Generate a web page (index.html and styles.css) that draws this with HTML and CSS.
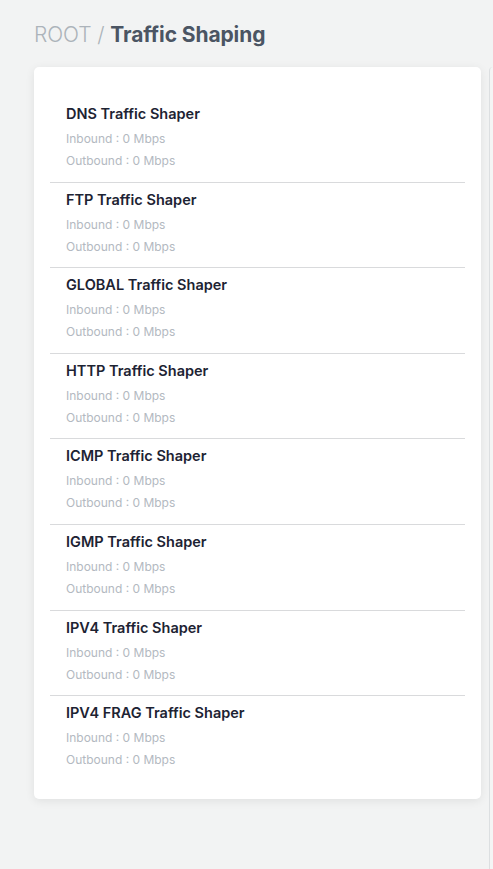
FILE: index.html
```html
<!DOCTYPE html>
<html>
<head>
<meta charset="utf-8">
<link rel="stylesheet" href="styles.css">
</head>
<body>
<div class="page">
  <h1 class="crumb"><span class="root">ROOT / </span><span class="current">Traffic Shaping</span></h1>
  <div class="row">
    <div class="card">
      <div class="item"><div class="name">DNS Traffic Shaper</div><div class="sub">Inbound : 0 Mbps</div><div class="sub">Outbound : 0 Mbps</div></div>
      <div class="item"><div class="name">FTP Traffic Shaper</div><div class="sub">Inbound : 0 Mbps</div><div class="sub">Outbound : 0 Mbps</div></div>
      <div class="item"><div class="name">GLOBAL Traffic Shaper</div><div class="sub">Inbound : 0 Mbps</div><div class="sub">Outbound : 0 Mbps</div></div>
      <div class="item"><div class="name">HTTP Traffic Shaper</div><div class="sub">Inbound : 0 Mbps</div><div class="sub">Outbound : 0 Mbps</div></div>
      <div class="item"><div class="name">ICMP Traffic Shaper</div><div class="sub">Inbound : 0 Mbps</div><div class="sub">Outbound : 0 Mbps</div></div>
      <div class="item"><div class="name">IGMP Traffic Shaper</div><div class="sub">Inbound : 0 Mbps</div><div class="sub">Outbound : 0 Mbps</div></div>
      <div class="item"><div class="name">IPV4 Traffic Shaper</div><div class="sub">Inbound : 0 Mbps</div><div class="sub">Outbound : 0 Mbps</div></div>
      <div class="item"><div class="name">IPV4 FRAG Traffic Shaper</div><div class="sub">Inbound : 0 Mbps</div><div class="sub">Outbound : 0 Mbps</div></div>
    </div>
    <div class="side"></div>
  </div>
</div>
</body>
</html>
```
FILE: styles.css
```css
html, body {
  margin: 0;
  padding: 0;
  background: #f2f3f3;
  height: 100%;
  overflow: hidden;
}
body {
  font-family: Inter, "Noto Sans", sans-serif;
}
.page {
  padding: 21px 0 0 34px;
}
.crumb {
  margin: 0;
  font-size: 21px;
  line-height: 28px;
  font-weight: 300;
  letter-spacing: -0.1px;
}
.root {
  color: #acb3ba;
}
.current {
  color: #4b5563;
  font-weight: 700;
}
.row {
  display: flex;
  align-items: flex-start;
  gap: 8px;
  margin-top: 18px;
}
.card {
  flex: 0 0 447px;
  box-sizing: border-box;
  background: #fff;
  border-radius: 5px;
  box-shadow: 0 2px 10px rgba(0, 0, 0, 0.08);
  padding: 30px 16px 18px;
}
.item {
  padding: 6px 16px 9.6px;
  border-top: 1px solid #d9dadc;
}
.item:first-child {
  border-top: none;
  padding-top: 6px;
}
.name {
  font-size: 14.5px;
  line-height: 22px;
  font-weight: 600;
  color: #1d2333;
  margin-bottom: 3px;
}
.sub {
  font-size: 12px;
  line-height: 22px;
  color: #b3b9c1;
}
.side {
  flex: 0 0 3px;
  height: 840px;
  background: #f4f5f5;
  border-left: 1px solid #dcdfe1;
  border-radius: 4px 0 0 0;
}
```
